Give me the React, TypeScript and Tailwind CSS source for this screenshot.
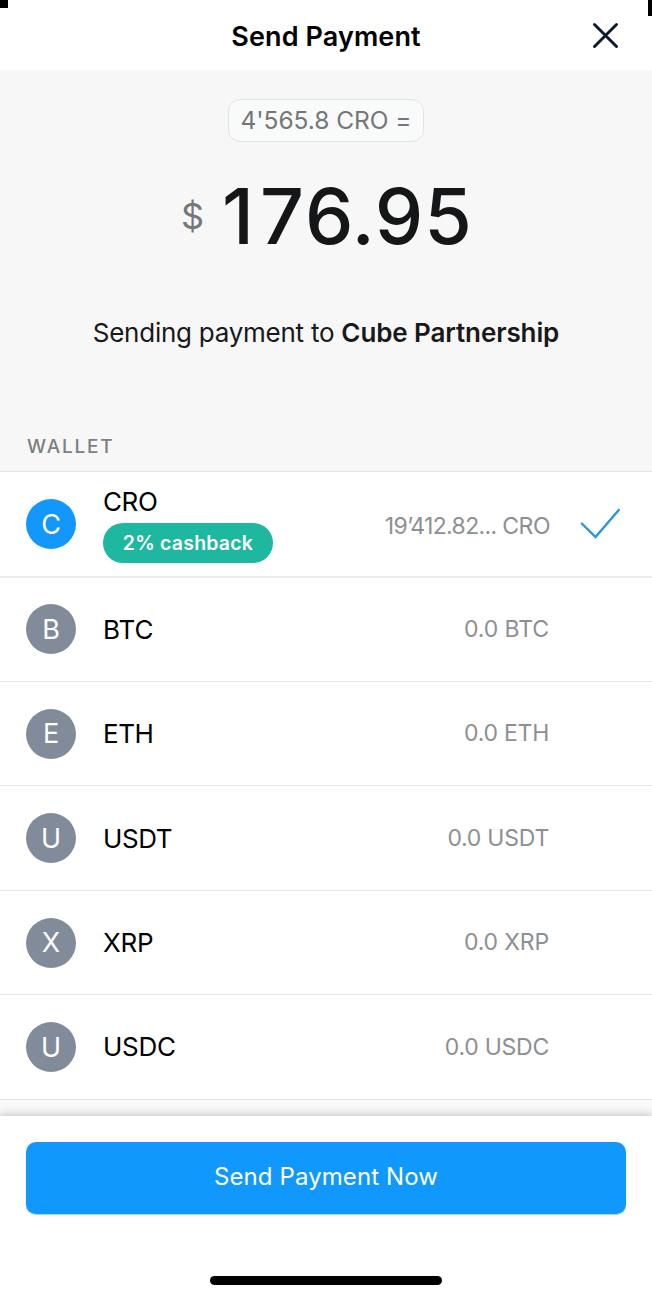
const wallets = [
  { code: 'BTC', amount: '0.0 BTC', name: 'tracking-[0px]', value: 'tracking-[-0.1px]' },
  { code: 'ETH', amount: '0.0 ETH', name: 'tracking-[-0.5px]', value: 'tracking-[-0.25px]' },
  { code: 'USDT', amount: '0.0 USDT', name: 'tracking-[-0.45px]', value: 'tracking-[-0.25px]' },
  { code: 'XRP', amount: '0.0 XRP', name: 'tracking-[-0.2px]', value: 'tracking-[-0.15px]' },
  { code: 'USDC', amount: '0.0 USDC', name: 'tracking-[-0.3px]', value: 'tracking-[-0.25px]' },
];

export default function App() {
  return (
    <div className="relative flex h-[1298px] w-[652px] flex-col overflow-hidden bg-white font-['Inter',sans-serif] text-black">
      <div className="absolute top-0 left-0 size-2 bg-black" />
      <div className="absolute top-0 right-0 h-4 w-1 bg-black" />

      <header className="grid h-[70px] shrink-0 grid-cols-[1fr_auto_1fr] items-center">
        <span />
        <h1 className="pt-[4px] text-[27px] font-semibold leading-8 tracking-[0.1px]">Send Payment</h1>
        <button aria-label="Close" className="mt-[1px] mr-[33px] justify-self-end">
          <svg width="27" height="27" viewBox="0 0 27 27" fill="none" stroke="#0b1c30" strokeWidth="3" strokeLinecap="round">
            <path d="M2.5 2.5 24.5 24.5M24.5 2.5 2.5 24.5" />
          </svg>
        </button>
      </header>

      <section className="flex h-[402px] shrink-0 flex-col items-center border-b border-[#e2e3e4] bg-[#f7f7f7]">
        <div className="mt-[29px] flex h-[43px] w-[196px] items-center justify-center rounded-[12px] border border-[#e2e3e4] bg-[#f9fafa] text-[24.5px] text-[#747778]">
          <span className="whitespace-nowrap tracking-[-0.05px]">4'565.8 CRO =</span>
        </div>
        <div className="mt-[26px] flex h-[96px] w-full items-center pl-[181px] whitespace-nowrap">
          <span className="w-[41px] text-[36px] text-[#75787a]">$</span>
          <span className="text-[77px] font-medium leading-[96px] tracking-[1px] text-[#141617]">
            <span className="tracking-[6px]">1</span>7<span className="tracking-[-2px]">6</span>
            <span className="tracking-[0px]">.</span>95
          </span>
        </div>
        <p className="mt-[53px] text-[26px] leading-8 whitespace-nowrap text-[#17191a]">
          <span className="tracking-[-0.25px]">Sending payment to </span>
          <span className="font-semibold tracking-[-0.1px]">Cube Partnership</span>
        </p>
        <h2 className="mt-[86px] w-full pl-[27px] text-[19px] font-medium leading-6 tracking-[1.8px] text-[#7c8082]">WALLET</h2>
      </section>

      <main className="flex shrink-0 flex-col">
        <div className="flex h-[105.5px] items-center border-b-2 border-[#ececed] pr-[31px] pl-[26px]">
          <div className="flex size-[50px] items-center justify-center rounded-full bg-[#1497fb] pt-0.5 text-[27px] text-white">C</div>
          <div className="ml-[27px] flex flex-col items-start pb-[3px]">
            <span className="text-[26px] leading-[42px] tracking-[-0.4px]">CRO</span>
            <span className="flex h-10 w-[170px] items-center justify-center rounded-full bg-[#1eb8a0] text-[19.5px] font-semibold tracking-[0.2px] whitespace-nowrap text-white">2% cashback</span>
          </div>
          <span className="ml-auto pt-1 text-[23px] whitespace-nowrap text-[#8c9092]">
            <span className="tracking-[-0.65px]">19’412.82... </span>
            <span className="tracking-[-0.5px]">CRO</span>
          </span>
          <svg className="ml-[30px]" width="41" height="31" viewBox="0 0 41 31" fill="none" stroke="#2d93dc" strokeWidth="2.4" strokeLinecap="round">
            <path d="M1.8 15.5 15.5 29 38.8 2" />
          </svg>
        </div>
        {wallets.map((w) => (
          <div key={w.code} className="flex h-[104.45px] items-center border-b border-[#e5e6e7] pr-[103px] pl-[26px]">
            <div className="flex size-[50px] items-center justify-center rounded-full bg-[#828b99] pt-0.5 text-[27px] text-white">{w.code[0]}</div>
            <span className={`ml-[27px] text-[26px] ${w.name}`}>{w.code}</span>
            <span className={`ml-auto text-[23px] whitespace-nowrap text-[#8c9092] ${w.value}`}>{w.amount}</span>
          </div>
        ))}
      </main>

      <div className="h-[16.25px] shrink-0 bg-[#fafafa]" />

      <footer className="relative flex flex-1 flex-col items-center bg-white shadow-[0_0_10px_1px_rgba(0,0,0,0.24)]">
        <button className="mt-[26px] h-[73px] w-[600px] rounded-[10px] border-b border-[#a5d8fd] bg-[#1198fc] pb-0.5 text-[24px] tracking-[0.1px] text-white">
          Send Payment Now
        </button>
        <div className="mt-[61px] h-[9px] w-[232px] rounded-full bg-black" />
      </footer>
    </div>
  );
}
